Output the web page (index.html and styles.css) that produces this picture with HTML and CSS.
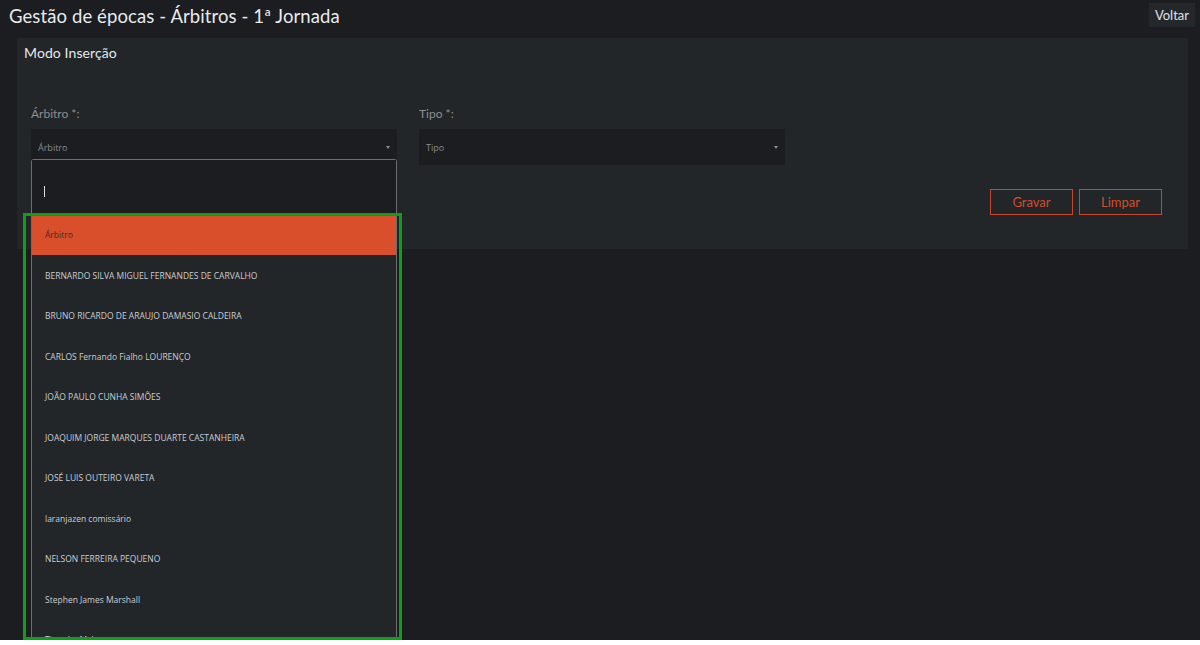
FILE: index.html
```html
<!DOCTYPE html>
<html lang="pt">

<head>
    <meta charset="UTF-8">
    <meta name="viewport" content="width=device-width, initial-scale=1.0">
    <title>Gestão de épocas - Árbitros</title>
    <link rel="stylesheet" href="styles.css">
</head>

<body>
    <header class="topbar">
        <h1 class="page-title">Gestão de épocas - Árbitros - 1ª Jornada</h1>
        <button type="button" class="back-button">Voltar</button>
    </header>

    <section class="card">
        <h2 class="card-title">Modo Inserção</h2>

        <div class="form-row">
            <div class="field">
                <label class="field-label">Árbitro *:</label>
                <div class="select">
                    <span class="select-value">Árbitro</span>
                    <span class="select-arrow"></span>
                </div>
                <!-- dropdown aberto -->
                <div class="dropdown">
                    <div class="dropdown-search"><span class="caret"></span></div>
                    <ul class="options">
                        <li class="option selected">Árbitro</li>
                        <li class="option">BERNARDO SILVA MIGUEL FERNANDES DE CARVALHO</li>
                        <li class="option">BRUNO RICARDO DE ARAUJO DAMASIO CALDEIRA</li>
                        <li class="option">CARLOS Fernando Fialho LOURENÇO</li>
                        <li class="option">JOÃO PAULO CUNHA SIMÕES</li>
                        <li class="option">JOAQUIM JORGE MARQUES DUARTE CASTANHEIRA</li>
                        <li class="option">JOSÉ LUIS OUTEIRO VARETA</li>
                        <li class="option">laranjazen comissário</li>
                        <li class="option">NELSON FERREIRA PEQUENO</li>
                        <li class="option">Stephen James Marshall</li>
                        <li class="option">Timothy McLennan</li>
                    </ul>
                </div>
            </div>
            <div class="field">
                <label class="field-label">Tipo *:</label>
                <div class="select">
                    <span class="select-value">Tipo</span>
                    <span class="select-arrow"></span>
                </div>
            </div>
        </div>

        <div class="actions">
            <button type="button" class="outline-button">Gravar</button>
            <button type="button" class="outline-button">Limpar</button>
        </div>
    </section>

    <div class="highlight-box"></div>
</body>

</html>
```

FILE: styles.css
```css
html {
    background-color: #fff;
}

body {
    font-family: Lato, "Open Sans", sans-serif;
    margin: 0;
    padding: 0;
    height: 640px;
    background-color: #1b1d21;
    position: relative;
}

.topbar {
    display: flex;
    justify-content: space-between;
    align-items: flex-start;
    padding: 3px 5px 0 9px;
    height: 35px;
}

.page-title {
    margin: 2px 0 0;
    font-size: 18.5px;
    font-weight: 400;
    color: #e8eaec;
    letter-spacing: 0.1px;
}

.back-button {
    background-color: #25282b;
    color: #dfe2e5;
    border: none;
    font-family: Lato, sans-serif;
    font-size: 13px;
    height: 24px;
    padding: 0 6px;
}

.card {
    margin: 0 12px 0 17px;
    height: 211px;
    padding: 6px 26px 0 14px;
    box-sizing: border-box;
    background-color: #222629;
}

.card-title {
    margin: 0 0 0 -7px;
    font-size: 14px;
    font-weight: 400;
    color: #e6e8ea;
    letter-spacing: 0.1px;
}

.form-row {
    display: flex;
    gap: 22px;
    margin-top: 44px;
}

.field {
    width: 366px;
    position: relative;
}

.field-label {
    display: block;
    font-size: 12px;
    color: #8b8e91;
    height: 24px;
    padding-top: 1px;
    box-sizing: border-box;
}

.select {
    height: 36px;
    background-color: #1b1d21;
    display: flex;
    align-items: center;
    justify-content: space-between;
    padding: 0 7px;
}

.select-value {
    font-family: "Open Sans", sans-serif;
    font-size: 9px;
    color: #8a8d90;
    padding-top: 1px;
}

.select-arrow {
    width: 0;
    height: 0;
    border-left: 2.5px solid transparent;
    border-right: 2.5px solid transparent;
    border-top: 3px solid #8a8d90;
}

.dropdown {
    position: absolute;
    top: 54px;
    left: 0;
    width: 366px;
    box-sizing: border-box;
    border: 1px solid #6b6e71;
    border-bottom: none;
    border-radius: 3px 3px 0 0;
    background-color: #222629;
    z-index: 5;
}

.dropdown-search {
    height: 54px;
    background-color: #1b1d21;
    display: flex;
    align-items: center;
    padding-left: 12px;
}

.caret {
    width: 1px;
    height: 11px;
    background-color: #e0e0e0;
    margin-top: 8px;
}

.options {
    list-style: none;
    margin: 0;
    padding: 0;
}

.option {
    height: 40.5px;
    line-height: 41px;
    padding-left: 13px;
    font-family: "Open Sans", sans-serif;
    font-size: 8.5px;
    color: #c9cdd1;
    white-space: nowrap;
}

.option.selected {
    background-color: #d94f2b;
    color: #3b2a24;
}

.actions {
    display: flex;
    justify-content: flex-end;
    gap: 6px;
    margin-top: 24px;
}

.outline-button {
    width: 83px;
    height: 26px;
    background: none;
    border: 1px solid #c8472a;
    color: #d24d2c;
    font-family: Lato, sans-serif;
    font-size: 13px;
}

.highlight-box {
    position: absolute;
    left: 23px;
    top: 213px;
    width: 379px;
    height: 427px;
    box-sizing: border-box;
    border: 3px solid #0f9e18;
    z-index: 10;
}
```
